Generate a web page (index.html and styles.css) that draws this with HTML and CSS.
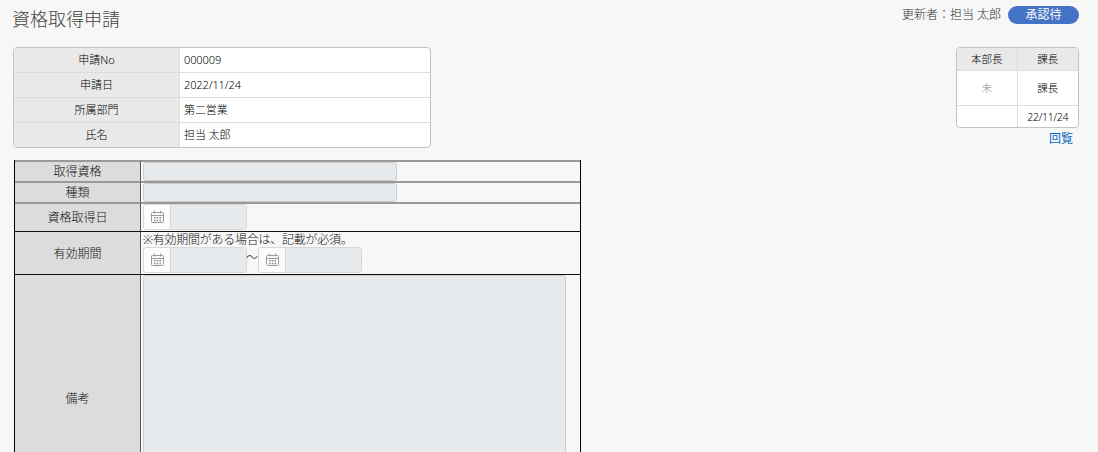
FILE: index.html
```
<!DOCTYPE html>
<html lang="ja">
<head>
    <meta charset="UTF-8">
    <meta name="viewport" content="width=device-width, initial-scale=1.0">
    <title>資格取得申請</title>
    <link rel="stylesheet" href="styles.css">
</head>
<body>
    <svg width="0" height="0" class="defs">
        <symbol id="calendar" viewBox="0 0 13 13">
            <path d="M1.5 2.5h10q1 0 1 1v8q0 1-1 1h-10q-1 0-1-1v-8q0-1 1-1zM.5 5.5h12M3.5 .5v3M9.5 .5v3" fill="none" stroke="#999"/>
            <path d="M3 7h1.5v1.5H3zM5.7 7h1.5v1.5H5.7zM8.5 7H10v1.5H8.5zM3 9.7h1.5v1.5H3zM5.7 9.7h1.5v1.5H5.7zM8.5 9.7H10v1.5H8.5z" fill="#888"/>
        </symbol>
    </svg>
    <header class="page-header">
        <h1>資格取得申請</h1>
        <div class="updater">
            <span>更新者：担当 太郎</span>
            <span class="status">承認待</span>
        </div>
    </header>
    <div class="summary">
        <table class="info-table">
            <tr><th>申請No</th><td>000009</td></tr>
            <tr><th>申請日</th><td>2022/11/24</td></tr>
            <tr><th>所属部門</th><td>第二営業</td></tr>
            <tr><th>氏名</th><td>担当 太郎</td></tr>
        </table>
        <div class="approval">
            <table class="approval-table">
                <tr class="role"><th>本部長</th><th>課長</th></tr>
                <tr class="stamp"><td class="pending">未</td><td>課長</td></tr>
                <tr class="date"><td></td><td>22/11/24</td></tr>
            </table>
            <a href="#" class="circulate">回覧</a>
        </div>
    </div>
    <table class="form-table">
        <tr class="row-text">
            <th>取得資格</th>
            <td><input type="text" class="text-input" disabled></td>
        </tr>
        <tr class="row-text">
            <th>種類</th>
            <td><input type="text" class="text-input" disabled></td>
        </tr>
        <tr class="row-date">
            <th>資格取得日</th>
            <td>
                <div class="date-input">
                    <span class="addon"><svg class="icon"><use href="#calendar"/></svg></span>
                    <input type="text" disabled>
                </div>
            </td>
        </tr>
        <tr class="row-period">
            <th>有効期間</th>
            <td>
                <div class="note">※有効期間がある場合は、記載が必須。</div>
                <div class="period">
                    <div class="date-input">
                        <span class="addon"><svg class="icon"><use href="#calendar"/></svg></span>
                        <input type="text" disabled>
                    </div>
                    <span class="tilde">～</span>
                    <div class="date-input">
                        <span class="addon"><svg class="icon"><use href="#calendar"/></svg></span>
                        <input type="text" disabled>
                    </div>
                </div>
            </td>
        </tr>
        <tr class="row-remarks">
            <th>備考</th>
            <td><textarea disabled></textarea></td>
        </tr>
    </table>
</body>
</html>
```
FILE: styles.css
```
* {
    box-sizing: border-box;
}
body {
    margin: 0;
    height: 452px;
    overflow: hidden;
    padding: 0 19px 0 13px;
    background: #f7f7f7;
    color: #111;
    font-family: "Noto Sans", "Noto Sans CJK JP", sans-serif;
    font-size: 12px;
    font-weight: 300;
}
.defs {
    display: block;
}
.page-header {
    display: flex;
    justify-content: space-between;
    height: 47px;
}
h1 {
    margin: 7px 0 0 -1px;
    font-size: 18px;
    line-height: 24px;
    font-weight: 300;
    color: #444;
}
.updater {
    display: flex;
    gap: 7px;
    margin-top: 6px;
    line-height: 18px;
    color: #333;
}
.status {
    width: 71px;
    height: 18px;
    border-radius: 9px;
    background: #4472c4;
    color: #fff;
    font-weight: 400;
    text-align: center;
}
.summary {
    display: flex;
    justify-content: space-between;
    height: 113px;
}
table {
    border-spacing: 0;
    table-layout: fixed;
}
th, td {
    padding: 0;
    font-weight: inherit;
}
.info-table, .approval-table {
    border: 1px solid #c4c4c4;
    border-radius: 4px;
    background: #fff;
    overflow: hidden;
}
.info-table {
    width: 418px;
    height: 101px;
    font-size: 11px;
    line-height: 16px;
    color: #000;
}
.info-table th, .info-table td {
    height: 25px;
    border-bottom: 1px solid #ddd;
}
.info-table tr:last-child th, .info-table tr:last-child td {
    height: 24px;
    border-bottom: none;
}
.info-table th {
    width: 166px;
    background: #e9e9e9;
    border-right: 1px solid #ddd;
}
.info-table td {
    padding-left: 4px;
    letter-spacing: -0.1px;
}
.approval {
    width: 123px;
}
.approval-table {
    width: 123px;
    height: 81px;
    font-size: 10.5px;
    line-height: 15px;
    color: #000;
    text-align: center;
}
.approval-table th, .approval-table td {
    border-bottom: 1px solid #ddd;
}
.approval-table th:first-child, .approval-table td:first-child {
    border-right: 1px solid #ddd;
}
.approval-table .role th {
    height: 23px;
    background: #e9e9e9;
}
.approval-table .stamp td {
    height: 35px;
}
.approval-table .date td {
    height: 21px;
    border-bottom: none;
    letter-spacing: -0.3px;
    padding-top: 1px;
}
.approval-table .pending {
    color: #888;
}
.circulate {
    display: block;
    margin: 2px 6px 0 0;
    line-height: 18px;
    color: #0066c0;
    font-weight: 400;
    text-align: right;
    text-decoration: none;
}
.form-table {
    width: 567px;
    margin-left: 1px;
    border-left: 1px solid #000;
    border-right: 1px solid #000;
    line-height: 17px;
}
.form-table th {
    width: 125px;
    background: #dcdcdc;
}
.form-table td {
    padding-left: 2px;
    border-left: 1px solid #555;
    vertical-align: top;
}
.form-table th, .form-table td {
    border-top: 1px solid #111;
}
.row-text th, .row-text td, .row-date th, .row-date td {
    border-top: 2px solid #999;
}
.row-text th, .row-text td {
    height: 21px;
}
.row-date th, .row-date td {
    height: 29px;
}
.row-period th, .row-period td {
    height: 43px;
}
.row-remarks th, .row-remarks td {
    height: 247px;
}
input, textarea {
    display: block;
    margin: 0;
    padding: 0;
    border: 1px solid #ccc;
    border-radius: 3px;
    background: #e7ebee;
    resize: none;
}
.text-input {
    width: 254px;
    height: 19px;
}
.date-input {
    display: flex;
    width: 104px;
    height: 26px;
    border: 1px solid #d8d8d8;
    border-radius: 3px;
    background: #fcfcfc;
    overflow: hidden;
}
.date-input input {
    flex: 1;
    min-width: 0;
    border: none;
    border-left: 1px solid #d8d8d8;
    border-radius: 0;
}
.addon {
    display: flex;
    flex: 0 0 26px;
    justify-content: center;
    padding: 5px 0 0 1px;
}
.icon {
    width: 13px;
    height: 13px;
}
.note {
    height: 15px;
    line-height: 15px;
    letter-spacing: -0.25px;
}
.period {
    display: flex;
}
.tilde {
    width: 11px;
    margin-left: -1px;
    margin-right: 1px;
    line-height: 22px;
}
textarea {
    width: 423px;
    height: 245px;
}
```
